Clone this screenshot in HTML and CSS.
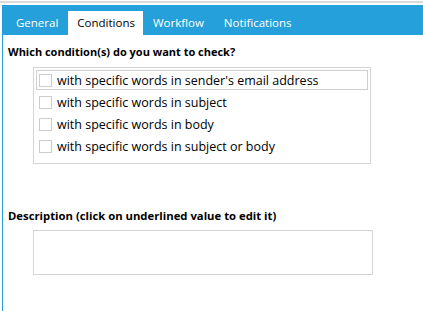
FILE: index.html
```html
<!DOCTYPE html>
<html>
<head>
    <title>Rule Editor</title>
    <link rel="stylesheet" href="styles.css">
</head>
<body>
<div class="topline"></div>
<div class="panel">
    <div class="tabs">
        <div class="tab">General</div>
        <div class="tab active">Conditions</div>
        <div class="tab">Workflow</div>
        <div class="tab">Notifications</div>
    </div>

    <div class="content">
        <h2>Which condition(s) do you want to check?</h2>
        <div class="condition-list">
            <label class="condition focused"><span class="checkbox"></span>with specific words in sender's email address</label>
            <label class="condition"><span class="checkbox"></span>with specific words in subject</label>
            <label class="condition"><span class="checkbox"></span>with specific words in body</label>
            <label class="condition"><span class="checkbox"></span>with specific words in subject or body</label>
        </div>

        <h2 class="desc-title">Description (click on underlined value to edit it)</h2>
        <div class="description"></div>
    </div>
</div>
</body>
</html>
```

FILE: styles.css
```css
body {
    margin: 0;
    padding-top: 1px;
    background-color: #fff;
    color: #000;
    font-family: 'Open Sans', sans-serif;
    font-size: 12px;
}

.topline {
    height: 2px;
    background-color: #dadada;
    margin-bottom: 2px;
}

.panel {
    margin-left: 2px;
    border-left: 1px solid #26a0da;
    height: 306px;
}

.tabs {
    display: flex;
    align-items: flex-end;
    height: 30px;
    padding-left: 3px;
    background-color: #26a0da;
}

.tab {
    height: 24px;
    line-height: 23px;
    padding: 0 10px;
    color: #fff;
    font-size: 11.5px;
}

.tab.active {
    background-color: #fff;
    color: #000;
    padding: 0 8px 0 9px;
}

.content {
    padding: 9px 0 0 5px;
}

h2 {
    margin: 0;
    font-size: 11px;
    font-weight: bold;
    line-height: 15px;
}

.condition-list {
    margin: 8px 0 0 25px;
    width: 332px;
    height: 93px;
    border: 1px solid #d5d5d5;
    padding: 2px 2px 0 2px;
}

.condition {
    display: flex;
    align-items: center;
    height: 18px;
    margin-bottom: 2px;
    padding-left: 2px;
    border: 1px solid transparent;
    font-size: 12.5px;
}

.condition.focused {
    border-color: #cfcfcf;
}

.checkbox {
    width: 11px;
    height: 11px;
    border: 1px solid #cdcdcd;
    margin-right: 5px;
    flex-shrink: 0;
}

.desc-title {
    margin-top: 44px;
    font-size: 11.3px;
}

.description {
    margin: 7px 0 0 25px;
    width: 338px;
    height: 43px;
    border: 1px solid #d5d5d5;
}
```
